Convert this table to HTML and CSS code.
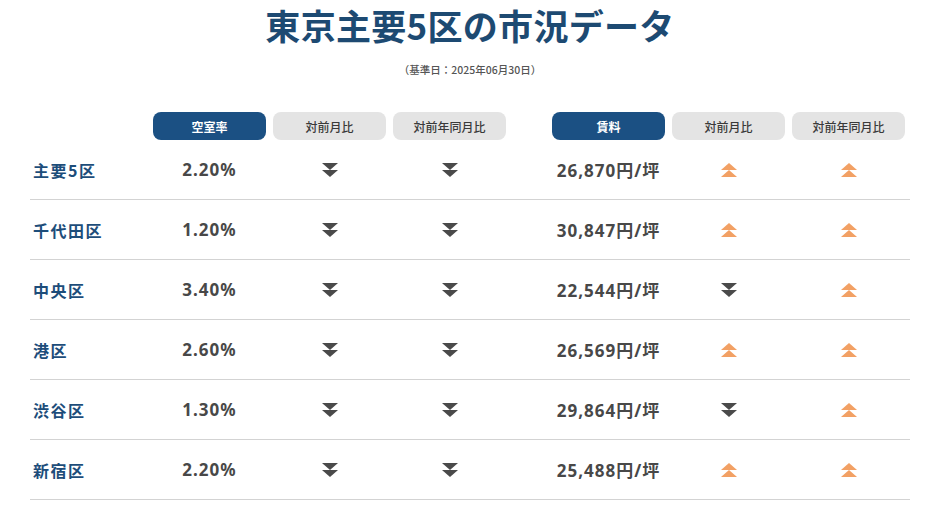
FILE: index.html
```html
<!DOCTYPE html>
<html lang="ja">
<head>
<meta charset="utf-8">
<link rel="stylesheet" href="styles.css">
</head>
<body>
<svg width="0" height="0" class="defs">
  <defs>
    <symbol id="down" viewBox="0 0 16 16"><polygon points="0,1 16,1 8,8"/><polygon points="0,8 16,8 8,15"/></symbol>
    <symbol id="up" viewBox="0 0 16 16"><polygon points="8,1 16,8 0,8"/><polygon points="8,8 16,15 0,15"/></symbol>
  </defs>
</svg>
<div class="wrap">
  <h1 class="title">東京主要5区の市況データ</h1>
  <p class="sub">（基準日：2025年06月30日）</p>
  <div class="table">
    <div class="row head">
      <div></div>
      <div class="pill main">空室率</div>
      <div class="pill">対前月比</div>
      <div class="pill">対前年同月比</div>
      <div></div>
      <div class="pill main">賃料</div>
      <div class="pill">対前月比</div>
      <div class="pill">対前年同月比</div>
    </div>
    <div class="row">
      <div class="name">主要5区</div><div class="val">2.20%</div>
      <div class="ic"><svg class="dn"><use href="#down"/></svg></div><div class="ic"><svg class="dn"><use href="#down"/></svg></div>
      <div></div><div class="val">26,870円/坪</div>
      <div class="ic"><svg class="upc"><use href="#up"/></svg></div><div class="ic"><svg class="upc"><use href="#up"/></svg></div>
    </div>
    <div class="row">
      <div class="name">千代田区</div><div class="val">1.20%</div>
      <div class="ic"><svg class="dn"><use href="#down"/></svg></div><div class="ic"><svg class="dn"><use href="#down"/></svg></div>
      <div></div><div class="val">30,847円/坪</div>
      <div class="ic"><svg class="upc"><use href="#up"/></svg></div><div class="ic"><svg class="upc"><use href="#up"/></svg></div>
    </div>
    <div class="row">
      <div class="name">中央区</div><div class="val">3.40%</div>
      <div class="ic"><svg class="dn"><use href="#down"/></svg></div><div class="ic"><svg class="dn"><use href="#down"/></svg></div>
      <div></div><div class="val">22,544円/坪</div>
      <div class="ic"><svg class="dn"><use href="#down"/></svg></div><div class="ic"><svg class="upc"><use href="#up"/></svg></div>
    </div>
    <div class="row">
      <div class="name">港区</div><div class="val">2.60%</div>
      <div class="ic"><svg class="dn"><use href="#down"/></svg></div><div class="ic"><svg class="dn"><use href="#down"/></svg></div>
      <div></div><div class="val">26,569円/坪</div>
      <div class="ic"><svg class="upc"><use href="#up"/></svg></div><div class="ic"><svg class="upc"><use href="#up"/></svg></div>
    </div>
    <div class="row">
      <div class="name">渋谷区</div><div class="val">1.30%</div>
      <div class="ic"><svg class="dn"><use href="#down"/></svg></div><div class="ic"><svg class="dn"><use href="#down"/></svg></div>
      <div></div><div class="val">29,864円/坪</div>
      <div class="ic"><svg class="dn"><use href="#down"/></svg></div><div class="ic"><svg class="upc"><use href="#up"/></svg></div>
    </div>
    <div class="row">
      <div class="name">新宿区</div><div class="val">2.20%</div>
      <div class="ic"><svg class="dn"><use href="#down"/></svg></div><div class="ic"><svg class="dn"><use href="#down"/></svg></div>
      <div></div><div class="val">25,488円/坪</div>
      <div class="ic"><svg class="upc"><use href="#up"/></svg></div><div class="ic"><svg class="upc"><use href="#up"/></svg></div>
    </div>
  </div>
</div>
</body>
</html>
```
FILE: styles.css
```css
html, body { margin: 0; padding: 0; background: #fff; }
body { font-family: "Noto Sans", "Noto Sans CJK JP", sans-serif; color: #444; }
.defs { position: absolute; }
.wrap { width: 880px; margin-left: 30px; }
.title {
  margin: 0; padding: 0;
  text-align: center; font-size: 35px; font-weight: 700; line-height: 50px;
  letter-spacing: 0.3px; color: #1d4a72;
  font-family: "Noto Sans CJK JP", sans-serif;
}
.sub {
  margin: 13px 0 0; text-align: center; font-size: 10.5px; line-height: 14px; color: #555;
  font-family: "Noto Sans CJK JP", sans-serif; font-weight: 500;
}
.table { margin-top: 35px; }
.row {
  display: grid;
  grid-template-columns: 116px 113px 113px 113px 32px 113px 113px 113px;
  column-gap: 7px;
  align-items: center;
  height: 59px;
  border-bottom: 1px solid #d3d3d3;
}
.row.head { height: 28px; border-bottom: none; }
.pill {
  height: 28px; border-radius: 8px; background: #e4e4e4; color: #3a3a3a;
  display: flex; align-items: center; justify-content: center;
  font-size: 12px; font-weight: 500; font-family: "Noto Sans CJK JP", sans-serif;
}
.pill.main { background: #1b5083; color: #fff; font-weight: 700; }
.name {
  padding-left: 3px; color: #1d4d7a; font-weight: 700; font-size: 16px; letter-spacing: 1.5px;
  font-family: "Noto Sans CJK JP", sans-serif;
}
.val { text-align: center; font-weight: 700; font-size: 17px; letter-spacing: 1px; color: #484848; }
.ic { display: flex; justify-content: center; }
.ic svg { width: 16px; height: 16px; display: block; }
.dn { fill: #4a4a4a; }
.upc { fill: #f2a064; }
```
